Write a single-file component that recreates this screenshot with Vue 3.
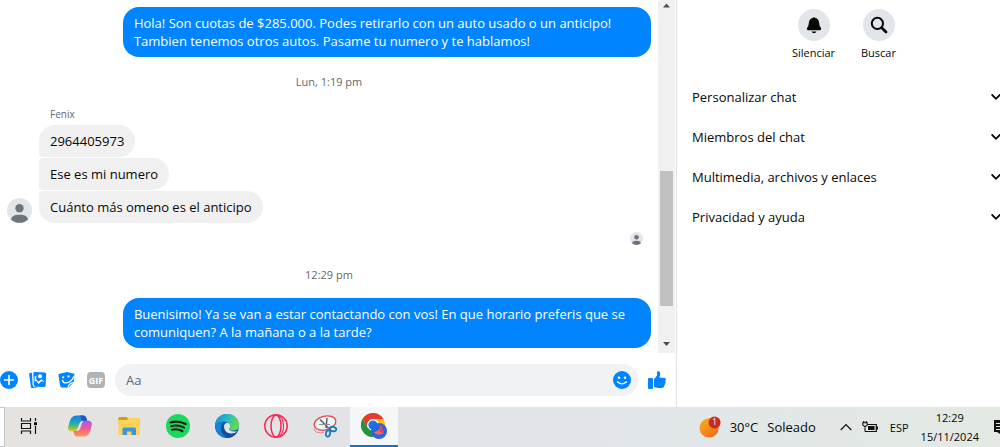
<template>
  <div class="desktop">
    <div class="messenger">
      <main class="chat">
        <div class="history">
          <div class="messages">
            <p class="bubble mine">{{ firstReply }}</p>
            <time class="stamp">Lun, 1:19 pm</time>
            <div class="group">
              <svg class="avatar" viewBox="0 0 24 24">
                <circle cx="12" cy="12" r="12" fill="#e2e5e9" />
                <circle cx="12" cy="9.8" r="4" fill="#6f747a" />
                <path d="M3.800 20.600C4.600 17.300 7.200 16 12 16s7.400 1.300 8.200 4.600A12 12 0 0 1 3.800 20.600z" fill="#6f747a" />
              </svg>
              <div class="stack">
                <span class="sender">Fenix</span>
                <p v-for="text in received" :key="text" class="bubble theirs">{{ text }}</p>
              </div>
            </div>
            <svg class="seen" viewBox="0 0 24 24">
              <circle cx="12" cy="12" r="12" fill="#e2e5e9" />
              <circle cx="12" cy="9.8" r="4.2" fill="#6f747a" />
              <path d="M3.800 20.600C4.600 17.300 7.200 16 12 16s7.400 1.300 8.200 4.600A12 12 0 0 1 3.800 20.600z" fill="#6f747a" />
            </svg>
            <time class="stamp">12:29 pm</time>
            <p class="bubble mine">{{ lastReply }}</p>
          </div>
          <div class="scrollbar">
            <svg class="arrow" viewBox="0 0 17 12"><path d="M5 7.500h7L8.500 3.500z" fill="#505050" /></svg>
            <div class="track">
              <div class="thumb"></div>
            </div>
            <svg class="arrow" viewBox="0 0 17 17"><path d="M5 6h7l-3.500 4z" fill="#505050" /></svg>
          </div>
        </div>

        <form class="composer" @submit.prevent>
          <div class="tools">
            <button type="button" aria-label="Más">
              <svg viewBox="0 0 18 18">
                <circle cx="9" cy="9" r="9" fill="#0084ff" />
                <path d="M9 4.500v9M4.500 9h9" stroke="#fff" stroke-width="1.600" stroke-linecap="round" />
              </svg>
            </button>
            <button type="button" aria-label="Foto">
              <svg viewBox="0 0 18 18">
                <path d="M0 2.500 3 1.600l.6 12.500 1 1.700 5 .8-6.600.4Q2 17 1.900 16z" fill="#0084ff" />
                <path d="M4.300 2.500Q4.300 1 5.800 1.100l10 .5q1.500.1 1.400 1.600l-.6 11.500q-.1 1.500-1.600 1.400l-8.500-.4q-1.500-.1-1.600-1.600z" fill="#0084ff" />
                <circle cx="11" cy="5.200" r="2" fill="#fff" />
                <path d="M5.600 10.500V5.700l1.700-1.200v4l2.200 2.300 3-2.800 3.200 3.500-3-1.500-3.200 3-2.200-3z" fill="#fff" />
              </svg>
            </button>
            <button type="button" aria-label="Sticker">
              <svg viewBox="0 0 18 18">
                <path d="M1.500 2.800 9 1l6.500 1.500q1.200.4 1 1.500l-.9 7.500-5.200 5.200-6.400-.3q-1.700-.2-1.900-2L.5 4.500Q.300 3.200 1.500 2.800z" fill="#0084ff" />
                <path d="M10 17q.3-5 6-5.400" fill="none" stroke="#fff" stroke-width="1.100" />
                <path d="M4.500 9.500q.8 3.300 5 2.200 3-1 4.800-3.400l2-3.300" fill="none" stroke="#fff" stroke-width="1.300" stroke-linecap="round" />
                <circle cx="5.200" cy="6.300" r="1.100" fill="#fff" />
                <circle cx="10.500" cy="5.400" r="1.100" fill="#fff" />
              </svg>
            </button>
            <button type="button" class="gif">GIF</button>
          </div>
          <label class="field">
            <input type="text" placeholder="Aa" aria-label="Mensaje" />
            <svg viewBox="0 0 18 18">
              <circle cx="9" cy="9" r="9" fill="#0084ff" />
              <circle cx="6" cy="6.800" r="1.300" fill="#fff" />
              <circle cx="12" cy="6.800" r="1.300" fill="#fff" />
              <path d="M4.500 10.800q4.500 4.200 9 0" fill="none" stroke="#fff" stroke-width="1.300" stroke-linecap="round" />
            </svg>
          </label>
          <button type="submit" aria-label="Me gusta">
            <svg viewBox="0 0 18 18">
              <rect x="0" y="7" width="5" height="11" rx="1" fill="#0084ff" />
              <path d="M6 8.300 9 4.600V1.500Q9 .2 10.200.2q2.200.2 2 3l-.7 3.500H16q2 .1 1.800 1.900 0 .8-.6 1.200.7.700.5 1.600-.1.900-.8 1.300.3 1.100-.7 2 .1 1.800-1.700 2.100-4.500.7-8.500-.9z" fill="#0084ff" />
            </svg>
          </button>
        </form>
      </main>

      <aside class="details">
        <div class="actions">
          <button type="button" class="action">
            <span class="round">
              <svg viewBox="0 0 20 20">
                <path d="M10 2.200q1 0 1.300.9 3.700.8 3.900 5.100.1 2.700 1.500 4.300.7 1 .3 2-.2.700-1.300.7H4.300q-1.100 0-1.300-.7-.4-1 .3-2 1.400-1.600 1.500-4.300.2-4.300 3.900-5.100.3-.9 1.300-.9zM7.500 16.500h5q-.6 1.700-2.500 1.700t-2.500-1.700z" fill="#080809" />
              </svg>
            </span>
            Silenciar
          </button>
          <button type="button" class="action">
            <span class="round">
              <svg viewBox="0 0 20 20" fill="none" stroke="#080809">
                <circle cx="8.400" cy="8.400" r="5.600" stroke-width="2" />
                <path d="m12.700 12.700 4.300 4.300" stroke-width="2.800" stroke-linecap="round" />
              </svg>
            </span>
            Buscar
          </button>
        </div>
        <button v-for="section in sections" :key="section" type="button" class="section">
          {{ section }}
          <svg viewBox="0 0 12 12"><path d="m2.200 4 3.800 3.800L9.800 4" fill="none" stroke="#080809" stroke-width="1.800" stroke-linecap="round" /></svg>
        </button>
      </aside>
    </div>

    <footer class="taskbar">
      <div class="search-edge"></div>
      <nav class="apps">
        <button type="button" aria-label="Vista de tareas">
          <svg viewBox="0 0 24 24" fill="none" stroke="#111" stroke-width="1.200">
            <path d="M2.500 4v3h9V4M2.500 20v-3h9v3M2.500 9.500h9v5h-9zM16.500 4v3M16.500 12v8" />
            <path d="M15 8.200h3v3h-3z" fill="#111" stroke="none" />
          </svg>
        </button>
        <button type="button" aria-label="Copilot">
          <svg viewBox="0 0 24 24">
            <defs>
              <linearGradient id="cpBlue" x1="0" y1="0" x2="0" y2="1">
                <stop offset="0" stop-color="#1a7fe0" />
                <stop offset=".45" stop-color="#1ca6c5" />
                <stop offset=".75" stop-color="#6fc24c" />
                <stop offset="1" stop-color="#f2c41c" />
              </linearGradient>
              <linearGradient id="cpPink" x1="0" y1="0" x2="0" y2="1">
                <stop offset="0" stop-color="#a45be8" />
                <stop offset=".5" stop-color="#f0589a" />
                <stop offset="1" stop-color="#fb9b45" />
              </linearGradient>
            </defs>
            <path d="M8 1.500h7.500q2.300.2 3 3l.7 2.500h-4.700q-2.300.1-3 2.400L9.300 15q-.8 2.300-3 2.300H3q-3-.3-2.800-4 .7-5 3-9.300Q5.200 1.500 8 1.500z" fill="url(#cpBlue)" />
            <path d="M12 1.500h3.500q2.300.2 3 3l.7 2.500h-3.500q-2.200 0-2.600-2-.3-2.500-1.100-3.500z" fill="#2157c7" />
            <path d="M16 22.500H9q-2.500-.2-3-3L5.200 17H9q2.500-.1 3.200-2.400L14 9q.8-2.200 3-2.200h4q3 .3 2.800 4-.7 5-3 9.200-1.800 2.500-4.800 2.500z" fill="url(#cpPink)" />
          </svg>
        </button>
        <button type="button" aria-label="Explorador de archivos">
          <svg viewBox="0 0 24 24">
            <path d="M1.500 3h8l2 2h11v6h-21z" fill="#d99b10" />
            <path d="M1.500 6H10l1.500-2h11v17h-21z" fill="#ffd35a" />
            <path d="M5.500 21v-6q0-1.500 1.500-1.500h10.500q1.500 0 1.500 1.500v6h-4.500v-3.500H10V21z" fill="#3b96dc" />
          </svg>
        </button>
        <button type="button" aria-label="Spotify">
          <svg viewBox="0 0 24 24">
            <circle cx="12" cy="12" r="12" fill="#1ed760" />
            <path d="M4.500 8.400q8-2.200 15.200 1.600M5.200 12.200q7-1.900 12.800 1.500M6 15.800q5.600-1.500 10.400 1.300" fill="none" stroke="#10200f" stroke-width="2.100" stroke-linecap="round" />
          </svg>
        </button>
        <button type="button" aria-label="Edge">
          <svg viewBox="0 0 24 24">
            <defs>
              <linearGradient id="edTop" x1="0" y1="0" x2="1" y2=".3">
                <stop offset="0" stop-color="#1687d8" />
                <stop offset=".55" stop-color="#28bcc8" />
                <stop offset="1" stop-color="#66d94f" />
              </linearGradient>
            </defs>
            <circle cx="12" cy="12" r="12" fill="#0f5db4" />
            <path d="M0 12A12 12 0 0 1 24 11.500q-.2 4.800-5.300 5-3.700.1-4.400-1.500 1.200-1.300.8-3Q13.500 7.200 8 7.600 2.500 8 0 12z" fill="url(#edTop)" />
            <path d="M0 12q2.500-4 8-4-1.300 1.100-1.800 3Q4.500 18 12 24 2 23.500 0 12z" fill="#1385d8" />
            <path d="M15 11.500q-.5-2.700-3.300-2.700-3.300.7-3 4.700.8 5.500 6.800 6.300 4 .2 6.800-2.600-4.200 1-7-.7-1.500-1-1-1.800 1.300-1.400.7-3.200z" fill="#e0e4e9" />
            <path d="M9 12.500Q9 19 16 19.800q4 .2 6.300-2.600Q19 23.800 12 24 4.500 19.500 6.400 12.500 7.500 9 11.700 8.800 9 9.500 9 12.500z" fill="#124c9c" />
          </svg>
        </button>
        <button type="button" aria-label="Opera GX">
          <svg viewBox="0 0 24 24" fill="none" stroke="#fa2855" stroke-width="1.500">
            <circle cx="12" cy="12" r="11.200" />
            <ellipse cx="12" cy="12" rx="5" ry="11" />
            <path d="M14 1.500q5.500 2 5.500 10.500T14 22.500" stroke-width="1.100" />
          </svg>
        </button>
        <button type="button" aria-label="Recortes">
          <svg viewBox="0 0 24 24" fill="none">
            <ellipse cx="12" cy="9" rx="11" ry="6.800" fill="#f3f4f6" stroke="#e04848" stroke-width="1.300" transform="rotate(-14 12 9)" />
            <path d="M1 14.500Q2 20 11 18.500" stroke="#ee8080" stroke-width="1" />
            <path d="M7 5.500 15.500 14M14 4l-1 10" stroke="#59626b" stroke-width="1.500" />
            <path d="M6 10.500h11" stroke="#8d9399" stroke-width="1" />
            <ellipse cx="20" cy="15" rx="3.300" ry="2.300" stroke="#1979bd" stroke-width="1.800" transform="rotate(15 20 15)" />
            <ellipse cx="15" cy="19.500" rx="2.100" ry="3.200" stroke="#1979bd" stroke-width="1.800" transform="rotate(15 15 19.500)" />
          </svg>
        </button>
        <button type="button" class="active" aria-label="Chrome">
          <svg class="chrome" viewBox="0 0 26 26">
            <circle cx="12" cy="12" r="12" fill="#fbc116" />
            <path d="M1.600 6A12 12 0 0 1 22.400 6H12a6 6 0 0 0-5.200 9z" fill="#e33b2e" />
            <path d="M1.600 6A12 12 0 0 0 12 24l5.200-9H6.800z" fill="#229342" />
            <circle cx="12" cy="12" r="5.800" fill="#fff" />
            <circle cx="12" cy="12" r="4.600" fill="#1a73e8" />
            <circle cx="18" cy="18" r="8" fill="#2866dc" />
            <path d="M19.800 11.500 18 17l-5.500 2.800 5 2 5.700-1.800z" fill="#ff6259" />
            <path d="m19.800 11.500-1.500 7.300 4.900 1.200z" fill="#d94466" />
          </svg>
        </button>
      </nav>
      <div class="tray">
        <button type="button" class="weather">
          <svg viewBox="0 0 24 24">
            <defs>
              <linearGradient id="sun" x1="0" y1="0" x2=".8" y2="1">
                <stop offset="0" stop-color="#f7b52c" />
                <stop offset="1" stop-color="#f36a10" />
              </linearGradient>
            </defs>
            <circle cx="11" cy="13" r="10.500" fill="url(#sun)" />
            <circle cx="17" cy="7" r="6.500" fill="#c92a1d" />
            <text x="17" y="10" text-anchor="middle" font-size="9" fill="#fff">1</text>
          </svg>
          <span>30°C</span>
          <span>Soleado</span>
        </button>
        <button type="button" class="caret" aria-label="Mostrar iconos ocultos">
          <svg viewBox="0 0 12 12"><path d="m.7 9 5.300-5.500L11.300 9" fill="none" stroke="#111" stroke-width="1.200" /></svg>
        </button>
        <svg class="battery" viewBox="0 0 16 12">
          <path d="M5.500 3.500h8.800v7H3" fill="none" stroke="#111" stroke-width="1.200" />
          <path d="M6 5h6.500v4H6zM14.500 5.500H16v3h-1.500z" fill="#111" />
          <path d="M.8 1.700h4.400v2.400L3 5.800.8 4.100zM1.700 0v2M4.300 0v2M3 5v5.500" fill="none" stroke="#111" stroke-width="1.100" />
        </svg>
        <button type="button" class="lang">ESP</button>
        <time class="clock">12:29<br />15/11/2024</time>
        <svg class="notice" viewBox="0 0 6 16">
          <path d="M0 1h6v14L3 13H0z" fill="#111" />
          <path d="M2 4.500h4M2 7.500h4M2 10.500h4" stroke="#e6ebe3" stroke-width="1" />
        </svg>
      </div>
    </footer>
  </div>
</template>

<script setup>
import { ref } from 'vue';

const firstReply = ref('Hola! Son cuotas de $285.000. Podes retirarlo con un auto usado o un anticipo! Tambien tenemos otros autos. Pasame tu numero y te hablamos!');
const lastReply = ref('Buenisimo! Ya se van a estar contactando con vos! En que horario preferis que se comuniquen? A la mañana o a la tarde?');
const received = ref(['2964405973', 'Ese es mi numero', 'Cuánto más omeno es el anticipo']);
const sections = ref(['Personalizar chat', 'Miembros del chat', 'Multimedia, archivos y enlaces', 'Privacidad y ayuda']);
</script>

<style>
body {
  margin: 0;
  background: #fff;
}
</style>

<style scoped>
* {
  box-sizing: border-box;
}

.desktop {
  display: flex;
  flex-direction: column;
  min-height: 100vh;
  overflow: hidden;
  font-family: "Open Sans", "Noto Sans", sans-serif;
  font-size: 13px;
  color: #080809;
}

button {
  display: flex;
  align-items: center;
  justify-content: center;
  padding: 0;
  border: 0;
  background: none;
  color: inherit;
  font: inherit;
  cursor: pointer;
}

svg {
  display: block;
  flex: none;
}

p {
  margin: 0;
}

.messenger {
  display: flex;
  flex: 1;
}

.chat {
  display: flex;
  flex: 1;
  flex-direction: column;
  min-width: 0;
}

.history {
  display: flex;
  flex: 1;
}

.messages {
  display: flex;
  flex: 1;
  flex-direction: column;
  align-items: flex-start;
  padding: 7px 7px 5px;
}

.bubble {
  padding: 7px 11px;
  border-radius: 16px;
  line-height: 18px;
}

.mine {
  align-self: flex-end;
  max-width: 82%;
  background: #0084ff;
  color: #fff;
}

.theirs {
  border-radius: 4px 16px 16px 4px;
  background: #f0f0f0;
}

.theirs:nth-of-type(1) {
  border-top-left-radius: 16px;
}

.theirs:last-child {
  border-bottom-left-radius: 16px;
}

.stamp {
  align-self: center;
  margin: 16px 0 14px;
  color: #65686c;
  font-size: 11px;
  font-weight: 500;
  line-height: 18px;
}

.group {
  display: flex;
  align-items: flex-end;
  gap: 7px;
}

.avatar {
  width: 25px;
  height: 25px;
}

.stack {
  display: flex;
  flex-direction: column;
  align-items: flex-start;
  gap: 1px;
}

.sender {
  padding: 0 11px 1px;
  color: #65686c;
  font-size: 10px;
  line-height: 18px;
}

.seen {
  align-self: flex-end;
  width: 13px;
  height: 13px;
  margin: 9px 8px 5px;
}

.scrollbar {
  display: flex;
  flex-direction: column;
  width: 17px;
  margin-right: 1px;
  background: #f1f1f1;
}

.track {
  display: flex;
  flex: 1;
  flex-direction: column;
  justify-content: flex-end;
  padding: 0 2px 30px;
}

.thumb {
  height: 46%;
  background: #c1c1c1;
}

.composer {
  display: flex;
  align-items: center;
  gap: 10px;
  padding: 11px 10px 11px 0;
}

.tools {
  display: flex;
  gap: 11px;
}

.composer svg {
  width: 18px;
  height: 18px;
}

.gif {
  width: 18px;
  height: 16px;
  margin: 1px 0;
  border-radius: 4px;
  background: #b0b3b8;
  color: #fff;
  font-size: 9px;
  font-weight: 700;
}

.field {
  display: flex;
  flex: 1;
  align-items: center;
  height: 32px;
  padding: 0 7px 0 11px;
  border-radius: 16px;
  background: #f0f2f5;
}

.field input {
  flex: 1;
  min-width: 0;
  padding: 0;
  border: 0;
  outline: 0;
  background: none;
  font: inherit;
}

.field input::placeholder {
  color: #65686c;
  opacity: 1;
}

.details {
  flex: 0 0 324px;
  padding: 9px 0 0 15px;
  border-left: 1px solid #dfe1e3;
}

.actions {
  display: flex;
  justify-content: center;
  margin-bottom: 15px;
}

.action {
  flex-direction: column;
  gap: 3px;
  width: 65px;
  font-size: 11px;
  line-height: 18px;
}

.round {
  display: flex;
  align-items: center;
  justify-content: center;
  width: 32px;
  height: 32px;
  border-radius: 50%;
  background: #e2e5e9;
}

.round svg {
  width: 20px;
  height: 20px;
}

.section {
  justify-content: space-between;
  width: 100%;
  height: 40px;
  font-weight: 500;
}

.section svg {
  width: 12px;
  height: 12px;
  margin-right: -2px;
}

.taskbar {
  display: flex;
  height: 40px;
  background: linear-gradient(90deg, #e6e2df, #e1e3e7 35%, #e1e6ea 65%, #e3e9e2);
}

.search-edge {
  width: 5px;
  margin-right: 2px;
  border: 1px solid #c4c4c4;
  border-left: 0;
  background: #fff;
}

.apps {
  display: flex;
  gap: 1px;
}

.apps button {
  width: 48px;
  border-bottom: 2px solid transparent;
}

.apps svg {
  width: 24px;
  height: 24px;
}

.apps .chrome {
  width: 26px;
  height: 26px;
}

.apps .active {
  border-color: #0078d7;
  background: #f4f6f8;
}

.tray {
  display: flex;
  align-items: center;
  margin-left: auto;
}

.weather {
  gap: 9px;
  margin-right: 24px;
}

.weather svg {
  width: 22px;
  height: 22px;
}

.caret {
  margin-right: 10px;
}

.caret svg {
  width: 12px;
  height: 12px;
}

.battery {
  width: 16px;
  height: 12px;
  margin-right: 12px;
}

.lang {
  margin-right: 12px;
  font-size: 11px;
}

.clock {
  margin-right: 15px;
  font-size: 11px;
  line-height: 19px;
  text-align: center;
}

.notice {
  width: 6px;
  height: 16px;
}
</style>
